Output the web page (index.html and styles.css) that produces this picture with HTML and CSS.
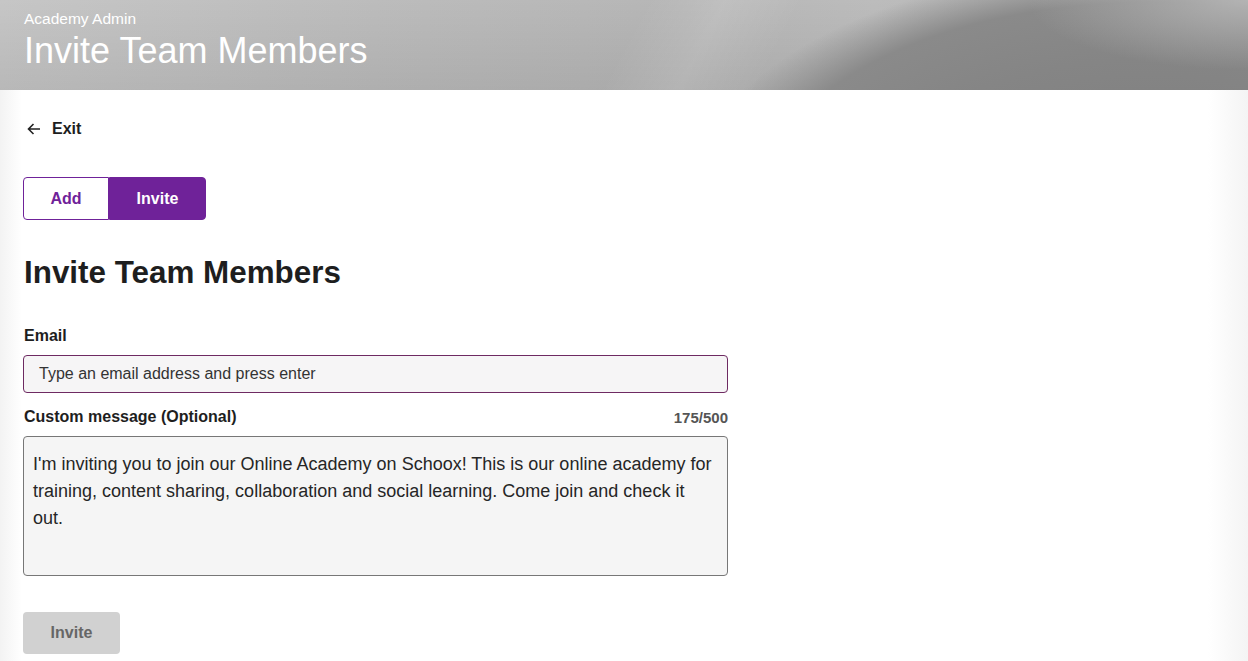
FILE: index.html
```html
<!DOCTYPE html>
<html>
<head>
<meta charset="utf-8">
<link rel="stylesheet" href="styles.css">
</head>
<body>
<header class="banner">
  <div class="banner-sub">Academy Admin</div>
  <h1 class="banner-title">Invite Team Members</h1>
</header>
<main class="content">
  <a class="exit" href="#">
    <svg class="exit-icon" viewBox="0 0 14 14" width="14" height="14"><path d="M13 7H1.5M6.5 2L1.5 7l5 5" fill="none" stroke="#222" stroke-width="1.6"/></svg>
    <span>Exit</span>
  </a>
  <div class="toggle">
    <button class="seg seg-add">Add</button>
    <button class="seg seg-invite">Invite</button>
  </div>
  <h2 class="heading">Invite Team Members</h2>
  <form class="form">
    <label class="label">Email</label>
    <div class="input">Type an email address and press enter</div>
    <div class="row">
      <label class="label">Custom message (Optional)</label>
      <span class="count">175/500</span>
    </div>
    <div class="textarea">I'm inviting you to join our Online Academy on Schoox! This is our online academy for training, content sharing, collaboration and social learning. Come join and check it out.</div>
    <button class="submit" type="button">Invite</button>
  </form>
</main>
</body>
</html>
```
FILE: styles.css
```css
* { box-sizing: border-box; }
html, body { margin: 0; padding: 0; }
body {
  font-family: "Liberation Sans", Arial, sans-serif;
  color: #1e1e1e;
  background: linear-gradient(90deg, #f3f3f3 0, #fff 22px, #fff calc(100% - 40px), #f4f4f4 100%);
  width: 1248px;
  height: 661px;
  overflow: hidden;
}
.banner {
  height: 90px;
  padding: 10px 24px 0;
  color: #fff;
  background:
    radial-gradient(ellipse 220px 70px at 1248px 0px, rgba(185,185,185,0.85) 0, rgba(185,185,185,0) 100%),
    radial-gradient(ellipse 460px 235px at 1150px 200px, #7c7c7c 0, #858585 60%, #8a8a8a 84%, rgba(140,140,140,0.5) 92%, rgba(140,140,140,0) 100%),
    linear-gradient(118deg, rgba(255,255,255,0) 50%, rgba(255,255,255,0.12) 56%, rgba(255,255,255,0) 62%),
    linear-gradient(180deg, rgba(0,0,0,0) 0, rgba(0,0,0,0.07) 100%),
    linear-gradient(90deg, #c6c6c6 0%, #bcbcbc 30%, #b6b6b6 55%, #bcbcbc 70%, #b0b0b0 100%);
}
.banner-sub {
  font-size: 15.5px;
  line-height: 18px;
}
.banner-title {
  margin: 2px 0 0;
  font-weight: normal;
  font-size: 36px;
  line-height: 42px;
}
.content {
  padding: 0 24px;
}
.exit {
  display: flex;
  align-items: center;
  gap: 11px;
  margin-top: 30px;
  height: 18px;
  padding-left: 3px;
  color: #1e1e1e;
  text-decoration: none;
  font-weight: bold;
  font-size: 16px;
}
.toggle {
  display: flex;
  margin-top: 39px;
  width: 183px;
  height: 43px;
  margin-left: -1px;
}
.seg {
  font-family: inherit;
  font-size: 16px;
  font-weight: bold;
  border: 1px solid #6f2299;
  cursor: pointer;
}
.seg-add {
  width: 86px;
  background: #fff;
  color: #6f2299;
  border-radius: 4px 0 0 4px;
}
.seg-invite {
  flex: 1;
  background: #6f2299;
  color: #fff;
  border-radius: 0 4px 4px 0;
}
.heading {
  margin: 35px 0 0;
  font-size: 31.4px;
  line-height: 36px;
  font-weight: bold;
  color: #1e1e1e;
}
.form {
  display: flex;
  flex-direction: column;
  width: 705px;
  margin-top: 36px;
  margin-left: -1px;
}
.label {
  font-weight: bold;
  font-size: 16px;
  line-height: 18px;
  padding-left: 1px;
}
.input {
  margin-top: 10px;
  height: 38px;
  border: 1px solid #6e2a62;
  border-radius: 4px;
  background: #f6f5f6;
  padding: 0 15px;
  display: flex;
  align-items: center;
  font-size: 16px;
  color: #333;
}
.row {
  display: flex;
  justify-content: space-between;
  align-items: center;
  margin-top: 15px;
}
.count {
  font-weight: bold;
  font-size: 15px;
  color: #555;
}
.textarea {
  margin-top: 10px;
  height: 140px;
  border: 1px solid #777;
  border-radius: 4px;
  background: #f5f5f5;
  padding: 14px 9px;
  font-size: 18px;
  line-height: 27px;
  color: #262626;
}
.submit {
  margin-top: 36px;
  width: 97px;
  height: 42px;
  border: none;
  border-radius: 4px;
  background: #d1d1d1;
  color: #666;
  font-family: inherit;
  font-weight: bold;
  font-size: 16px;
}
```
